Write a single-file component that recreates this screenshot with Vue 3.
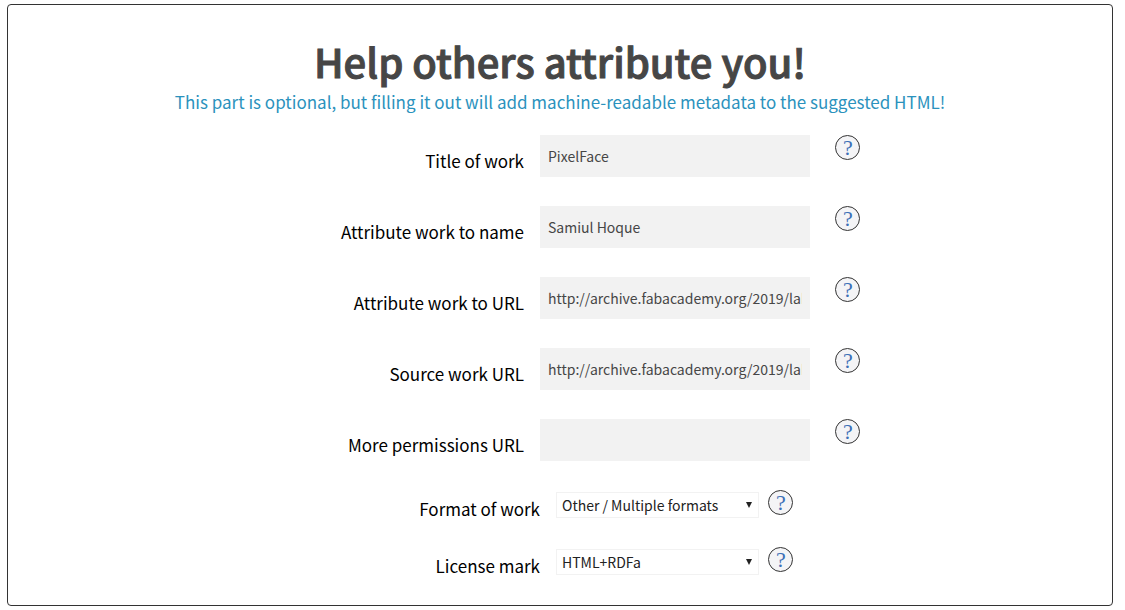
<script setup>
import { ref } from 'vue'

const fields = ref([
  { id: 'title', label: 'Title of work', type: 'text', value: 'PixelFace' },
  { id: 'name', label: 'Attribute work to name', type: 'text', value: 'Samiul Hoque' },
  { id: 'url', label: 'Attribute work to URL', type: 'text', value: 'http://archive.fabacademy.org/2019/labs/' },
  { id: 'source', label: 'Source work URL', type: 'text', value: 'http://archive.fabacademy.org/2019/labs/' },
  { id: 'permissions', label: 'More permissions URL', type: 'text', value: '' },
])

const choices = ref([
  { id: 'format', label: 'Format of work', value: 'Other / Multiple formats' },
  { id: 'mark', label: 'License mark', value: 'HTML+RDFa' },
])
</script>

<template>
  <main class="card">
    <h1>Help others attribute you!</h1>
    <p class="intro">
      This part is optional, but filling it out will add machine-readable metadata to the suggested HTML!
    </p>
    <form @submit.prevent>
      <div v-for="f in fields" :key="f.id" class="row">
        <label :for="f.id">{{ f.label }}</label>
        <input :id="f.id" v-model="f.value" :type="f.type" />
        <button type="button" class="help" :aria-label="'Help: ' + f.label">?</button>
      </div>
      <div v-for="c in choices" :key="c.id" class="row choice">
        <label :for="c.id">{{ c.label }}</label>
        <div class="picker">
          <select :id="c.id" v-model="c.value">
            <option>{{ c.value }}</option>
          </select>
          <svg class="arrow" viewBox="0 0 6 6" aria-hidden="true"><path d="M0 0H6L3 6Z" /></svg>
        </div>
        <button type="button" class="help" :aria-label="'Help: ' + c.label">?</button>
      </div>
    </form>
  </main>
</template>

<style>
body {
  background: #fff;
}
</style>

<style scoped>
.card {
  display: flow-root;
  margin: 4px 12px 4px 7px;
  padding: 34px 0 33px;
  border: 1px solid #333;
  border-radius: 4px;
  font-family: "Noto Sans CJK SC", "Noto Sans", sans-serif;
  color: #000;
}
h1 {
  margin: 0;
  font-size: 40px;
  font-weight: 500;
  line-height: 44px;
  text-align: center;
  color: #464646;
  -webkit-text-stroke: 1px #464646;
}
.intro {
  margin: 6px 0 20px;
  font-size: 17px;
  font-weight: 400;
  line-height: 26px;
  text-align: center;
  color: #2b92bd;
}
.row {
  display: flex;
  align-items: flex-start;
  margin-bottom: 29px;
}
label {
  box-sizing: border-box;
  width: calc(50% - 36px);
  padding-top: 13px;
  font-size: 17px;
  line-height: 26px;
  text-align: right;
}
input {
  box-sizing: border-box;
  width: 270px;
  height: 42px;
  margin: 0 25px 0 16px;
  padding: 0 8px;
  border: 0;
  border-radius: 0;
  background: #f2f2f2;
  font-family: inherit;
  font-size: 14px;
  color: #464646;
}
.help {
  box-sizing: border-box;
  flex: none;
  width: 25px;
  height: 25px;
  padding: 0 0 0 1px;
  border: 1px solid #333;
  border-radius: 50%;
  background: #f4f4f6;
  font-family: "Liberation Serif", serif;
  font-size: 22px;
  line-height: 22px;
  text-align: center;
  color: #3b6fb6;
}
.choice {
  margin-bottom: 32px;
}
.choice:last-child {
  margin-bottom: 0;
}
.choice label {
  width: calc(50% - 20px);
  padding-top: 6px;
  height: 25px;
}
.picker {
  position: relative;
  margin: 2px 9px 0 16px;
  height: 23px;
}
select {
  box-sizing: border-box;
  display: block;
  width: 203px;
  height: 26px;
  padding: 0 5px;
  border: 1px solid #f2f2f2;
  border-radius: 0;
  background: #fff;
  appearance: none;
  font-family: inherit;
  font-size: 14px;
  color: #222;
}
.arrow {
  position: absolute;
  top: 10px;
  right: 7px;
  width: 6px;
  height: 6px;
  fill: #222;
  pointer-events: none;
}
</style>
